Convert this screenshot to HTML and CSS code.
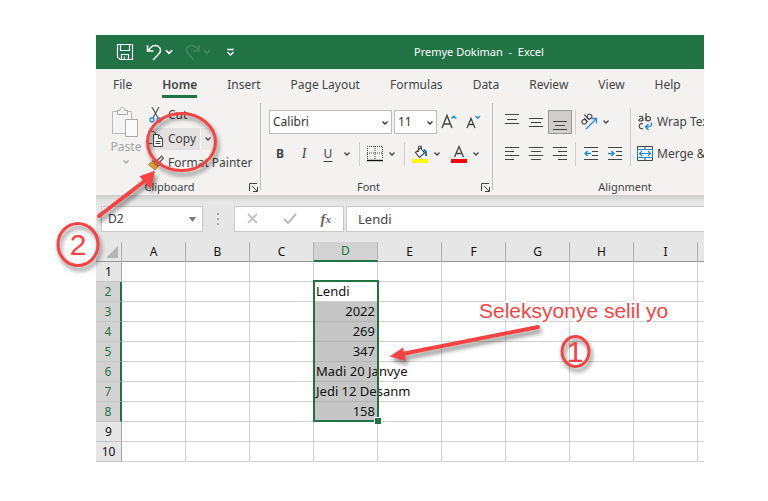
FILE: index.html
```html
<!DOCTYPE html>
<html lang="ht">
<head>
<meta charset="utf-8">
<title>Premye Dokiman - Excel</title>
<link rel="stylesheet" href="styles.css">
</head>
<body>
<svg class="defs" width="0" height="0" aria-hidden="true">
  <symbol id="caret" viewBox="0 0 8 6"><path d="M1.500 1.500 4 4l2.500-2.500" fill="none" stroke="currentColor" stroke-width="1.300"/></symbol>
  <symbol id="launcher" viewBox="0 0 9 9"><path d="M.5 8V.5H8M3 3l5 5M8.500 4v4.500H4" fill="none" stroke="currentColor"/></symbol>
</svg>
<main class="window">
  <header class="titlebar">
    <div class="quick">
      <button class="quick-save" aria-label="Save"><svg width="18" height="18" viewBox="0 0 18 18"><path d="M1.500 1.500h15v15H4l-2.500-2.500zM4.500 1.500v6h9v-6M5.500 16.500v-5h7v5M8.500 13.500v3" fill="none" stroke="#fff" stroke-width="1.200"/></svg></button>
      <button aria-label="Undo"><svg width="17" height="18" viewBox="0 0 17 18"><path d="M1.500 2v6h6M2 8C5 3 9 1 12.500 3.500c3 2.300 2.300 5.500 0 7.800L7 17" fill="none" stroke="#fff" stroke-width="1.500"/></svg></button>
      <svg class="quick-caret" width="10" height="8"><use href="#caret"/></svg>
      <button class="dim" aria-label="Redo"><svg width="17" height="18" viewBox="0 0 17 18"><path d="M15 2v6H9M15 8C12 3 8 1 4.500 3.500c-3 2.300-2.300 5.500 0 7.800L10 17" fill="none" stroke="currentColor" stroke-width="1.300"/></svg></button>
      <svg class="quick-caret dim" width="10" height="8"><use href="#caret"/></svg>
      <button class="quick-more" aria-label="Customize"><svg width="9" height="9" viewBox="0 0 9 9"><path d="M1 1.500h7M1.500 4 4.500 7l3-3" fill="none" stroke="#fff" stroke-width="1.300"/></svg></button>
    </div>
    <h1 class="title">Premye Dokiman&nbsp; -&nbsp; Excel</h1>
  </header>

  <nav class="tabs">
    <button class="tab">File</button>
    <button class="tab tab-on">Home</button>
    <button class="tab">Insert</button>
    <button class="tab">Page Layout</button>
    <button class="tab">Formulas</button>
    <button class="tab">Data</button>
    <button class="tab">Review</button>
    <button class="tab">View</button>
    <button class="tab">Help</button>
  </nav>

  <section class="ribbon">
    <div class="group clipboard">
      <div class="group-body">
        <button class="paste">
          <svg width="30" height="32" viewBox="0 0 30 32"><path d="M1.500 5.500h19v22h-19z" fill="#f4f4f4" stroke="#bbb"/><path d="M6.500 8.500v-4H9c0-4 5-4 5 0h2.500v4z" fill="#f4f4f4" stroke="#aaa"/><path d="M14.500 13.500h12v17h-12z" fill="#fafafa" stroke="#aaa"/></svg>
          <span>Paste</span>
          <svg width="8" height="6"><use href="#caret"/></svg>
        </button>
        <div class="clip-list">
          <button class="clip-item"><svg width="16" height="16" viewBox="0 0 16 16"><path d="m4 0 6 11M11 0 5 11" fill="none" stroke="#555" stroke-width="1.200"/><circle cx="4" cy="13" r="2" fill="none" stroke="#2b88d8" stroke-width="1.400"/><circle cx="11" cy="13" r="2" fill="none" stroke="#2b88d8" stroke-width="1.400"/></svg>Cut</button>
          <div class="clip-split">
            <button class="clip-item"><svg width="16" height="16" viewBox="0 0 16 16"><path d="M4.500 12.500h-4V.5H6L8 3" fill="none" stroke="#555"/><path d="M5.500 3.500h5l4 4v8h-9z" fill="#fff" stroke="#444"/><path d="M10.500 3.500v4h4M7.500 10.500h5M7.500 12.500h5" fill="none" stroke="#444"/></svg>Copy</button>
            <button class="caret-btn" aria-label="Copy options"><svg width="8" height="6"><use href="#caret"/></svg></button>
          </div>
          <button class="clip-item"><svg width="16" height="16" viewBox="0 0 16 16"><path d="m9 6 4.500-5 2 2L11 8" fill="#fff" stroke="#555" stroke-width="1.200"/><path d="m6.500 3.500 6 6-2 1.500L5 5.500z" fill="#fff" stroke="#444"/><path d="m5 6 5 5-3 4L.5 9.500z" fill="#e8a33d" stroke="#c57b16"/></svg>Format Painter</button>
        </div>
      </div>
      <footer class="group-name">Clipboard<button class="launch" aria-label="Clipboard options"><svg width="9" height="9"><use href="#launcher"/></svg></button></footer>
    </div>

    <div class="group font">
      <div class="group-body stack">
        <div class="tools combos">
          <label class="combo combo-font"><select aria-label="Font"><option>Calibri</option></select><svg width="8" height="6"><use href="#caret"/></svg></label>
          <label class="combo combo-size"><select aria-label="Font size"><option>11</option></select><svg width="8" height="6"><use href="#caret"/></svg></label>
          <button class="tool" aria-label="Grow font"><svg width="18" height="18" viewBox="0 0 18 18"><path d="M2 15 7 2.500 12 15M3.500 11h7" fill="none" stroke="#444" stroke-width="1.400"/><path d="m11.500 5.500 2.300-2.300 2.300 2.300" fill="none" stroke="#2b88d8" stroke-width="1.300"/></svg></button>
          <button class="tool" aria-label="Shrink font"><svg width="18" height="18" viewBox="0 0 18 18"><path d="m3 15 4-9.500L11 15M4.500 11.500h5" fill="none" stroke="#444" stroke-width="1.300"/><path d="m11.500 3 2.300 2.300L16 3" fill="none" stroke="#2b88d8" stroke-width="1.300"/></svg></button>
        </div>
        <div class="tools">
          <button class="tool bold">B</button>
          <button class="tool italic">I</button>
          <button class="tool under">U</button>
          <button class="caret-btn" aria-label="Underline styles"><svg width="8" height="6"><use href="#caret"/></svg></button>
          <i class="rule"></i>
          <button class="tool narrow" aria-label="Borders"><svg width="16" height="16" viewBox="0 0 16 16"><path d="M.5 13V.5h15V13M8 0v13M0 7h16" fill="none" stroke="#444" stroke-dasharray="1 1"/><path d="M0 14.500h16" stroke="#111" stroke-width="1.400"/></svg></button>
          <button class="caret-btn" aria-label="Border styles"><svg width="8" height="6"><use href="#caret"/></svg></button>
          <i class="rule"></i>
          <button class="tool narrow" aria-label="Fill colour"><svg width="16" height="18" viewBox="0 0 16 18"><path d="M3.500 7.500 8.500 3l4 5-5 4.500zM6.500 7V2.500c0-2 3-2 3 0V5" fill="none" stroke="#444" stroke-width="1.100"/><path d="M11.500 5c2 0 3 2 2.500 6" fill="none" stroke="#1b6fb5" stroke-width="2"/><path d="M0 14h16v4H0z" fill="#ff0"/></svg></button>
          <button class="caret-btn" aria-label="Fill colours"><svg width="8" height="6"><use href="#caret"/></svg></button>
          <button class="tool narrow after" aria-label="Font colour"><svg width="16" height="18" viewBox="0 0 16 18"><path d="M3.500 12 8 1.500 12.500 12M5 8.500h6" fill="none" stroke="#444" stroke-width="1.300"/><path d="M0 14h16v4H0z" fill="red"/></svg></button>
          <button class="caret-btn" aria-label="Font colours"><svg width="8" height="6"><use href="#caret"/></svg></button>
        </div>
      </div>
      <footer class="group-name">Font<button class="launch" aria-label="Font options"><svg width="9" height="9"><use href="#launcher"/></svg></button></footer>
    </div>

    <div class="group align">
      <div class="group-body">
        <div class="stack align-main">
          <div class="tools">
            <button class="tool" aria-label="Top align"><svg width="14" height="16"><path d="M0 .5h14M2 5.500h10M0 9.500h14" stroke="#444"/></svg></button>
            <button class="tool" aria-label="Middle align"><svg width="14" height="16"><path d="M0 4.500h14M2 8.500h10M0 12.500h14" stroke="#444"/></svg></button>
            <button class="tool pressed" aria-label="Bottom align"><svg width="14" height="16"><path d="M0 7.500h14M2 11.500h10M0 15.500h14" stroke="#444"/></svg></button>
            <i class="rule tight"></i>
            <button class="tool orient" aria-label="Orientation"><svg width="18" height="18" viewBox="0 0 18 18"><g fill="none" stroke="#444" stroke-width="1.100" transform="rotate(-45 6 7)"><circle cx="3.500" cy="7" r="2.300"/><path d="M6 4.500v5M8.500 2v7.500"/><circle cx="11" cy="7" r="2.300"/></g><path d="m6 16 10-10M11.500 5.500h5v5" fill="none" stroke="#2b88d8" stroke-width="1.300"/></svg></button>
            <button class="caret-btn" aria-label="Orientation options"><svg width="8" height="6"><use href="#caret"/></svg></button>
          </div>
          <div class="tools">
            <button class="tool" aria-label="Align left"><svg width="14" height="14"><path d="M0 .5h14M0 4.500h9M0 8.500h14M0 12.500h9" stroke="#444"/></svg></button>
            <button class="tool" aria-label="Center"><svg width="14" height="14"><path d="M0 .5h14M2 4.500h10M0 8.500h14M2 12.500h10" stroke="#444"/></svg></button>
            <button class="tool" aria-label="Align right"><svg width="14" height="14"><path d="M0 .5h14M5 4.500h9M0 8.500h14M5 12.500h9" stroke="#444"/></svg></button>
            <i class="rule tight"></i>
            <button class="tool" aria-label="Decrease indent"><svg width="14" height="14"><path d="M0 .5h14M8 4.500h6M8 8.500h6M0 12.500h14" stroke="#444"/><path d="M1 6.500h6M3.500 4 1 6.500 3.500 9" fill="none" stroke="#1a86d9" stroke-width="1.300"/></svg></button>
            <button class="tool" aria-label="Increase indent"><svg width="14" height="14"><path d="M0 .5h14M8 4.500h6M8 8.500h6M0 12.500h14" stroke="#444"/><path d="M0 6.500h6M3.500 4 6 6.500 3.500 9" fill="none" stroke="#1a86d9" stroke-width="1.300"/></svg></button>
          </div>
        </div>
        <div class="stack wide">
          <button class="wide-item"><svg width="16" height="18" viewBox="0 0 16 18"><g fill="none" stroke="#444" stroke-width="1.100"><path d="M2 3.500c4-1 4 0 4 4.500M6 5.500c-5-.5-5 3-2.500 2.500C5 8 6 7 6 6"/><path d="M9 0v8"/><circle cx="11.200" cy="5.700" r="2.200"/><path d="M6 11c-5-2-5 6 0 4.500"/></g><path d="M14.500 9.500v2c0 2-2 2.500-6 2.500m3-3-3 3 3 3" fill="none" stroke="#1a86d9" stroke-width="1.300"/></svg>Wrap Tex</button>
          <button class="wide-item"><svg width="16" height="16" viewBox="0 0 16 16"><path d="M.5.500h15v14H.5zM8 0v3M8 12v3" fill="none" stroke="#444"/><path d="M.5 3.500h15v8H.5z" fill="#fff" stroke="#1a86d9"/><path d="M2.500 7.500h11M5 5 2.500 7.500 5 10M11 5l2.500 2.500L11 10" fill="none" stroke="#1a86d9" stroke-width="1.200"/></svg>Merge &amp;</button>
        </div>
      </div>
      <footer class="group-name">Alignment</footer>
    </div>
  </section>

  <section class="formula">
    <label class="namebox"><input value="D2" aria-label="Name box"><svg width="7" height="5"><path d="M0 0h7L3.500 5z" fill="#777"/></svg></label>
    <svg class="dots" width="3" height="12"><path d="M0 0h2v2H0zM0 5h2v2H0zM0 10h2v2H0z" fill="#aaa"/></svg>
    <div class="fxbox">
      <button aria-label="Cancel"><svg width="12" height="12"><path d="m1 1 9 9M10 1l-9 9" stroke="#bbb" stroke-width="1.700"/></svg></button>
      <button aria-label="Enter"><svg width="14" height="12"><path d="m1 6 4 4 8-9" fill="none" stroke="#bbb" stroke-width="2"/></svg></button>
      <button class="fx" aria-label="Insert function">f<sub>x</sub></button>
    </div>
    <input class="entry" value="Lendi" aria-label="Formula bar">
  </section>

  <div class="sheet">
    <table>
      <colgroup><col class="col-num"><col span="10"></colgroup>
      <thead><tr><th class="corner" aria-label="Select all"><svg width="12" height="12"><path d="M12 0v12H0z" fill="#b5b5b5"/></svg></th><th>A</th><th>B</th><th>C</th><th class="on">D</th><th>E</th><th>F</th><th>G</th><th>H</th><th>I</th><th></th></tr></thead>
      <tbody>
        <tr><th>1</th><td></td><td></td><td></td><td></td><td></td><td></td><td></td><td></td><td></td><td></td></tr>
        <tr class="on"><th>2</th><td></td><td></td><td></td><td class="first">Lendi<span class="range"></span></td><td></td><td></td><td></td><td></td><td></td><td></td></tr>
        <tr class="on"><th>3</th><td></td><td></td><td></td><td class="sel num">2022</td><td></td><td></td><td></td><td></td><td></td><td></td></tr>
        <tr class="on"><th>4</th><td></td><td></td><td></td><td class="sel num">269</td><td></td><td></td><td></td><td></td><td></td><td></td></tr>
        <tr class="on"><th>5</th><td></td><td></td><td></td><td class="sel num">347</td><td></td><td></td><td></td><td></td><td></td><td></td></tr>
        <tr class="on"><th>6</th><td></td><td></td><td></td><td class="sel">Madi 20 Janvye</td><td></td><td></td><td></td><td></td><td></td><td></td></tr>
        <tr class="on"><th>7</th><td></td><td></td><td></td><td class="sel">Jedi 12 Desanm</td><td></td><td></td><td></td><td></td><td></td><td></td></tr>
        <tr class="on"><th>8</th><td></td><td></td><td></td><td class="sel num">158</td><td></td><td></td><td></td><td></td><td></td><td></td></tr>
        <tr><th>9</th><td></td><td></td><td></td><td></td><td></td><td></td><td></td><td></td><td></td><td></td></tr>
        <tr><th>10</th><td></td><td></td><td></td><td></td><td></td><td></td><td></td><td></td><td></td><td></td></tr>
      </tbody>
    </table>
  </div>
</main>

<svg class="notes" width="768" height="501" viewBox="0 0 768 501">
  <g class="ink">
    <ellipse cx="181.500" cy="142" rx="34" ry="28.500"/>
    <ellipse cx="78" cy="244.500" rx="20" ry="21"/>
    <ellipse cx="575.500" cy="351.500" rx="13.500" ry="15"/>
    <path class="shaft" d="m99 216 47-36"/>
    <path class="head" d="m153 173-11 4 8 9z"/>
    <path class="shaft" d="m538 327-136 27"/>
    <path class="head" d="m393 356 9-6 2 9z"/>
  </g>
  <text class="note-text" x="479" y="318">Seleksyonye selil yo</text>
  <text class="note-num" x="78" y="255">2</text>
  <text class="note-num" x="575" y="362">1</text>
</svg>
</body>
</html>
```
FILE: styles.css
```css
* { box-sizing: border-box; }
body {
  margin: 0;
  padding: 35px 64px 39px 96px;
  position: relative;
  background: #fff;
  color: #444;
  font: 12px/16px "Noto Sans", "Open Sans", sans-serif;
  overflow: hidden;
}
button, input, select { font: inherit; color: inherit; border: 0; background: none; padding: 0; margin: 0; }
button { display: flex; align-items: center; justify-content: center; white-space: nowrap; }
svg { display: block; flex: none; }
.defs { position: absolute; }
.window { overflow: hidden; background: #e6e6e6; }

.titlebar { display: grid; grid-template-columns: 318px 1fr; align-items: center; height: 34px; background: #217346; color: #fff; }
.quick { display: flex; align-items: center; padding-left: 20px; }
.quick-save { margin-right: 12px; }
.quick-caret { margin: 0 10px 0 1px; }
.quick-more { margin-left: 4px; }
.dim { color: #438a61; }
.title { margin: 0; font-size: 11px; font-weight: 400; line-height: 16px; white-space: nowrap; }

.tabs { display: flex; gap: 30px; height: 32px; padding: 5px 17px 3px; background: #f3f2f1; }
.tab { flex: none; height: 24px; border-bottom: 3px solid transparent; }
.tab-on { font-weight: 600; border-color: #217346; }

.ribbon { display: flex; height: 94px; background: #f3f2f1; }
.group { position: relative; display: flex; flex-direction: column; flex: none; padding-top: 3px; }
.group::after { content: ""; position: absolute; right: 0; top: 2px; height: 87px; border-right: 1px solid #c0bfbe; }
.align::after { display: none; }
.clipboard { width: 165px; }
.font { width: 232px; padding-left: 7px; }
.align { flex: 1; min-width: 0; padding-left: 7px; }
.group-body { display: flex; height: 75px; }
.group-name { position: relative; text-align: center; font-size: 11px; height: 16px; padding-right: 18px; }
.font .group-name { padding-right: 24px; }
.align .group-name { padding: 0 0 0 46px; }
.launch { position: absolute; right: 3px; top: 4px; }
.stack { display: flex; flex-direction: column; gap: 8px; padding-top: 6px; }
.tools { display: flex; align-items: center; height: 24px; }
.tool { width: 24px; height: 24px; }
.narrow { width: 20px; }
.after { margin-left: 5px; }
.orient { width: 20px; }
.caret-btn { width: 14px; height: 22px; }
.rule { height: 24px; margin: 0 5px; border-left: 1px solid #d0cfce; }
.tight { margin: 0 3px; }
.bold { font-weight: 700; }
.italic { font-family: "Liberation Serif", serif; font-size: 14px; font-style: italic; }
.under { text-decoration: underline; text-underline-offset: 3px; }
.pressed { background: #cfcecd; border: 1px solid #999; }

.paste { flex-direction: column; justify-content: flex-start; width: 36px; margin-left: 12px; padding-top: 2px; color: #a5a5a5; }
.paste span { margin: 1px 0 4px; }
.clip-list { display: flex; flex-direction: column; align-items: flex-start; gap: 2px; margin-left: 4px; }
.clip-item { height: 22px; gap: 4px; }
.clip-split { display: flex; gap: 1px; }
.clip-split .clip-item { width: 52px; background: #e2e1e0; justify-content: flex-start; }
.clip-split .caret-btn { background: #e9e8e7; }

.combo { position: relative; display: flex; height: 24px; background: #fff; border: 1px solid #bdbdbd; color: #333; }
.combo select { width: 100%; padding-left: 3px; appearance: none; }
.combo svg { position: absolute; right: 2px; top: 9px; pointer-events: none; }
.combo-font { width: 123px; margin-right: 2px; margin-left: 1px; }
.combo-size { width: 43px; }
.align-main { flex: none; }
.wide { position: relative; align-items: flex-start; margin-left: 3px; padding-left: 7px; }
.wide::before { content: ""; position: absolute; left: 0; top: 4px; height: 58px; border-left: 1px solid #d0cfce; }
.wide-item { height: 24px; gap: 4px; }

.formula { display: flex; height: 47px; padding: 11px 0 10px 5px; background: linear-gradient(#cfcecd, #e6e6e6 7px); color: #444; }
.namebox { display: flex; align-items: center; width: 102px; padding: 0 6px; background: #fff; border: 1px solid #c8c8c8; }
.namebox input { flex: 1; min-width: 0; }
.dots { margin: 7px 14px; }
.fxbox { display: flex; justify-content: space-around; align-items: center; width: 110px; background: #fff; border: 1px solid #c8c8c8; }
.fx { font: italic 700 15px/18px "Liberation Serif", serif; color: #666; }
.fx sub { font-size: 11px; }
.entry { flex: 1; min-width: 0; margin-left: 2px; padding-left: 11px; background: #fff; border: 1px solid #c8c8c8; border-right: 0; font-size: 13px; }

.sheet { overflow: hidden; }
table { width: 666px; table-layout: fixed; border-collapse: separate; border-spacing: 0; color: #111; }
col { width: 64px; }
.col-num { width: 26px; }
th, td { height: 20px; padding: 0; font-weight: 400; line-height: 19px; white-space: nowrap; }
th { background: #e6e6e6; border-right: 1px solid #a6a6a6; border-bottom: 1px solid #c4c4c4; }
thead th { border-bottom-color: #999; border-right-color: #b0b0b0; }
thead .on { background: #d2d2d2; color: #217346; border-bottom: 2px solid #217346; line-height: 18px; }
tbody .on th { background: #d2d2d2; color: #217346; border-right: 2px solid #217346; }
.corner svg { margin-left: 10px; }
td { position: relative; padding: 0 2px; background: #fff; border-right: 1px solid #d0d0d0; border-bottom: 1px solid #d0d0d0; font-size: 13px; }
.sel { z-index: 1; background: #c6c6c6; border-bottom-color: #b3b3b3; }
.first { z-index: 2; }
.num { text-align: right; }
.range { position: absolute; left: -1px; top: -2px; width: 66px; height: 142px; border: 2px solid #217346; }
.range::after { content: ""; position: absolute; right: -4px; bottom: -4px; width: 6px; height: 6px; background: #217346; border: 1px solid #fff; border-width: 1px 0 0 1px; }

.notes { position: absolute; left: 0; top: 0; pointer-events: none; }
.ink { fill: none; stroke: #f94343; stroke-width: 3px; filter: drop-shadow(2px 4px 2px rgb(0 0 0 / 45%)); }
.ink .head { fill: #f94343; }
.ink .shaft { stroke-width: 4px; stroke-linecap: round; }
.note-text, .note-num { font-family: "Liberation Sans", Arial, sans-serif; fill: #f94343; }
.note-text { font-size: 21px; stroke: #fff; stroke-width: 4px; paint-order: stroke; }
.note-num { font-size: 30px; text-anchor: middle; }
```
